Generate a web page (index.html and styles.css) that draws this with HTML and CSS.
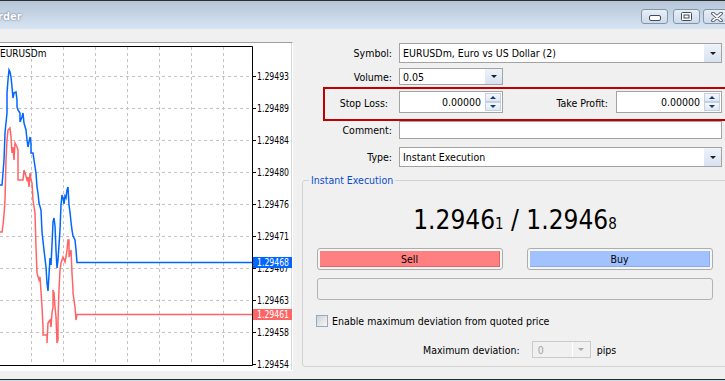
FILE: index.html
```html
<!DOCTYPE html>
<html lang="en">
<head>
    <meta charset="UTF-8" />
    <meta name="viewport" content="width=device-width, initial-scale=1" />
    <title>Order</title>
    <link rel="stylesheet" href="styles.css">
</head>
<body>

<div class="window">
    <div class="titlebar">
        <span class="title">rder</span>
        <div class="controls">
            <span class="ctl ctl-min">
                <svg width="12" height="6" viewBox="0 0 12 6"><rect x="0.5" y="0.5" width="11" height="5" rx="1.5" fill="#fff" stroke="#3d4b5e"/></svg>
            </span>
            <span class="ctl ctl-max">
                <svg width="11" height="9" viewBox="0 0 11 9"><rect x="0.5" y="0.5" width="10" height="8" rx="1" fill="#fff" stroke="#3d4b5e"/><rect x="3" y="3" width="5" height="3" fill="#fff" stroke="#3d4b5e"/></svg>
            </span>
            <span class="ctl ctl-close">
                <svg width="12" height="10" viewBox="0 0 12 10"><path d="M2 1.5 L10 8.5 M10 1.5 L2 8.5" stroke="#3d4b5e" stroke-width="3.6" stroke-linecap="round"/><path d="M2 1.5 L10 8.5 M10 1.5 L2 8.5" stroke="#fff" stroke-width="1.8" stroke-linecap="round"/></svg>
            </span>
        </div>
    </div>

    <div class="content">
        <div class="chart-frame">
            <svg class="chart" width="292" height="327" viewBox="0 43 292 327">
                <rect x="0" y="43" width="292" height="327" fill="#fff"/>
                <path d="M291.5 43 V370" stroke="#d9d9d9"/>
                <g class="grid">
                    <path d="M31.5 47 V365 M63.5 47 V365 M95.5 47 V365 M127.5 47 V365 M159.5 47 V365 M191.5 47 V365 M223.5 47 V365"/>
                    <path d="M0 76.5 H252 M0 108.5 H252 M0 140.5 H252 M0 172.5 H252 M0 204.5 H252 M0 236.5 H252 M0 268.5 H252 M0 300.5 H252 M0 332.5 H252"/>
                </g>
                <path d="M0 46.5 H252.5 V365.5 H0" fill="none" stroke="#000"/>
                <path d="M253 76.5h3 M253 108.5h3 M253 140.5h3 M253 172.5h3 M253 204.5h3 M253 236.5h3 M253 268.5h3 M253 300.5h3 M253 332.5h3 M253 364.5h3" stroke="#000"/>

                <text class="chart-title" x="0" y="57">EURUSDm</text>

                <g class="axis">
                    <text x="257" y="80" textLength="32" lengthAdjust="spacingAndGlyphs">1.29493</text>
                    <text x="257" y="112" textLength="32" lengthAdjust="spacingAndGlyphs">1.29489</text>
                    <text x="257" y="144" textLength="32" lengthAdjust="spacingAndGlyphs">1.29484</text>
                    <text x="257" y="176" textLength="32" lengthAdjust="spacingAndGlyphs">1.29480</text>
                    <text x="257" y="208" textLength="32" lengthAdjust="spacingAndGlyphs">1.29476</text>
                    <text x="257" y="240" textLength="32" lengthAdjust="spacingAndGlyphs">1.29471</text>
                    <text x="257" y="272" textLength="32" lengthAdjust="spacingAndGlyphs">1.29467</text>
                    <text x="257" y="304" textLength="32" lengthAdjust="spacingAndGlyphs">1.29463</text>
                    <text x="257" y="336" textLength="32" lengthAdjust="spacingAndGlyphs">1.29458</text>
                    <text x="257" y="368" textLength="32" lengthAdjust="spacingAndGlyphs">1.29454</text>
                </g>

                <polyline class="bid" points="0,232 2,232 3,225 4,215 5,200 6,160 7,140 8,130 10,128 11,137 12,153 13,147 14,160 15,143 17,147 18,150 18,180 23,180 24,170 25,173 27,180 28,177 29,187 30,173 31,180 32,183 33,200 35,213 36,247 37,273 39,280 40,277 42,307 43,327 43,335 47,335 47,343 48,323 50,320 51,327 52,313 53,307 53,290 54,293 55,307 56,317 57,343 58,340 58,320 59,290 60,270 61,263 62,260 63,257 65,262 66,257 67,250 68,240 69,240 69,257 71,250 72,273 73,290 73,293 75,307 76,320 77,314.5 252,314.5"/>
                <polyline class="ask" points="0,185 2,185 3,173 4,160 5,133 7,113 7,93 8,80 9,70 10,72 11,77 12,87 13,98 14,93 16,92 17,100 17,107 18,110 20,113 20,122 22,117 23,113 24,123 26,130 27,140 28,147 30,137 31,143 31,153 33,153 34,160 36,173 37,187 38,193 39,203 41,210 42,232 44,250 46,267 47,283 48,291 49,275 50,258 51,265 52,245 53,222 54,218 55,226 56,250 57,268 58,260 59,245 60,230 61,205 62,195 63,198 64,204 65,196 66,198 67,190 68,187 69,205 70,212 71,222 72,230 73,236 75,240 76,250 77,262.5 252,262.5"/>

                <rect x="253" y="257" width="39" height="11" fill="#0066ff"/>
                <text class="tag" x="257" y="266" textLength="32" lengthAdjust="spacingAndGlyphs">1.29468</text>
                <rect x="253" y="309" width="39" height="11" fill="#ff6464"/>
                <text class="tag" x="257" y="318" textLength="32" lengthAdjust="spacingAndGlyphs">1.29461</text>
            </svg>
        </div>

        <div class="form">
            <div class="row row-symbol">
                <label class="lbl">Symbol:</label>
                <div class="field wide">
                    <span class="val">EURUSDm, Euro vs US Dollar (2)</span>
                    <span class="drop"></span>
                </div>
            </div>

            <div class="row row-volume">
                <label class="lbl">Volume:</label>
                <div class="field short">
                    <span class="val">0.05</span>
                    <span class="drop"></span>
                </div>
            </div>

            <div class="row stops">
                <label class="lbl lbl-sl">Stop Loss:</label>
                <div class="field short num">
                    <span class="val">0.00000</span>
                    <span class="spin"><i class="up"></i><i class="down"></i></span>
                </div>
                <label class="lbl lbl-tp">Take Profit:</label>
                <div class="field tp num">
                    <span class="val">0.00000</span>
                    <span class="spin"><i class="up"></i><i class="down"></i></span>
                </div>
            </div>

            <div class="row row-comment">
                <label class="lbl">Comment:</label>
                <div class="field wide"></div>
            </div>

            <div class="row row-type">
                <label class="lbl">Type:</label>
                <div class="field wide">
                    <span class="val">Instant Execution</span>
                    <span class="drop"></span>
                </div>
            </div>

            <fieldset class="group">
                <legend>Instant Execution</legend>
                <div class="group-body">
                    <div class="quote">1.2946<small>1</small> / 1.2946<small>8</small></div>

                    <div class="trade">
                        <button class="btn sell"><span>Sell</span></button>
                        <button class="btn buy"><span>Buy</span></button>
                    </div>

                    <div class="bar"></div>

                    <div class="check-row">
                        <span class="checkbox"></span>
                        <span>Enable maximum deviation from quoted price</span>
                    </div>

                    <div class="dev-row">
                        <span>Maximum deviation:</span>
                        <div class="dev-combo">
                            <span class="val">0</span>
                            <span class="drop"></span>
                        </div>
                        <span>pips</span>
                    </div>
                </div>
            </fieldset>
        </div>
    </div>
</div>

</body>
</html>
```

FILE: styles.css
```css
* {
    box-sizing: border-box;
}
body {
    margin: 0;
    width: 725px;
    height: 381px;
    overflow: hidden;
    background: #cad8e9;
    font-family: "DejaVu Sans Condensed", "DejaVu Sans", "Liberation Sans", sans-serif;
    font-stretch: condensed;
    font-size: 10.5px;
    color: #000;
}
.window {
    height: 380px;
    background: #f0f0f0;
    border-bottom: 1px solid #2b2b2b;
    display: flex;
    flex-direction: column;
}

/* title bar */
.titlebar {
    height: 29px;
    flex: none;
    border-top: 1px solid #2e2e2e;
    background: linear-gradient(#b6c6d8, #d7e4f2);
    display: flex;
    justify-content: space-between;
    align-items: flex-start;
}
.title {
    margin: 9px 0 0 -2px;
    color: #fff;
    font-weight: bold;
    font-size: 11px;
    text-shadow: 0 0 2px #6d7f94, 0 0 1px #6d7f94;
}
.controls {
    display: flex;
    margin: 8px -5px 0 0;
}
.ctl {
    width: 27px;
    height: 15px;
    border: 1px solid #8494a9;
    border-radius: 3px;
    background: linear-gradient(#e7eef6, #cfdbea);
    display: flex;
    align-items: center;
    justify-content: center;
}
.ctl svg {
    display: block;
}
.ctl-min {
    margin-right: 5px;
    align-items: flex-end;
    padding-bottom: 2px;
}
.ctl-max {
    margin-right: 3px;
}

/* layout */
.content {
    flex: 1;
    display: flex;
    min-height: 0;
}

/* chart */
.chart-frame {
    flex: none;
    width: 293px;
    height: 329px;
    margin-top: 13px;
    border-top: 1px solid #a0a0a0;
    border-right: 1px solid #fff;
    border-bottom: 1px solid #fff;
}
.chart {
    display: block;
}
.grid path {
    stroke: #c4c4c4;
    stroke-dasharray: 3 3;
}
.chart text {
    font-family: "DejaVu Sans Condensed", "DejaVu Sans", sans-serif;
    font-size: 10px;
}
.tag {
    fill: #fff;
}
.ask, .bid {
    fill: none;
    stroke-width: 1.5;
    stroke-linejoin: miter;
}
.ask {
    stroke: #0066ff;
}
.bid {
    stroke: #ff6464;
}

/* order form */
.form {
    flex: 1;
    min-width: 0;
    display: flex;
    flex-direction: column;
}
.row {
    display: flex;
    align-items: center;
    flex: none;
}
.lbl {
    flex: none;
    width: 106px;
    padding-right: 7px;
    text-align: right;
}
.field {
    flex: none;
    display: flex;
    background: #fff;
    border: 1px solid #a3a3a3;
    height: 20px;
}
.field .val {
    flex: 1;
    display: flex;
    align-items: center;
    padding-left: 3px;
    white-space: nowrap;
}
.field.num .val {
    justify-content: flex-end;
    padding-right: 3px;
}
.wide {
    width: 323px;
}
.short {
    width: 104px;
}
.tp {
    width: 106px;
}
.drop {
    flex: none;
    width: 17px;
    background: linear-gradient(#eef3fa, #d7e2f0);
    display: flex;
    align-items: center;
    justify-content: center;
}
.drop::after {
    content: "";
    border-left: 3px solid transparent;
    border-right: 3px solid transparent;
    border-top: 3px solid #1f1f1f;
}
.spin {
    flex: none;
    width: 18px;
    display: flex;
    flex-direction: column;
    padding: 1px;
}
.spin i {
    flex: 1;
    display: flex;
    align-items: center;
    justify-content: center;
    border: 1px solid #c3d0e0;
    background: linear-gradient(#f5f8fc, #dfe8f3);
}
.spin i::after {
    content: "";
    border-left: 3px solid transparent;
    border-right: 3px solid transparent;
}
.spin .up::after {
    border-bottom: 3px solid #1b3a78;
}
.spin .down::after {
    border-top: 3px solid #1b3a78;
}

.row-symbol {
    margin-top: 14px;
}
.row-volume {
    margin-top: 5px;
}
.row-volume .field {
    height: 17px;
}
.stops {
    margin: 2px 0 0 30px;
    width: 412px;
    height: 34px;
    border: 2px solid #c00000;
    align-items: flex-start;
    padding-top: 2px;
}
.stops .field {
    height: 22px;
}
.stops .lbl {
    align-self: center;
    margin-top: -4px;
}
.lbl-sl {
    width: 74px;
    padding-right: 11px;
}
.lbl-tp {
    width: 113px;
    padding-right: 8px;
}
.row-comment .field {
    height: 18px;
}
.row-type {
    margin-top: 8px;
}

/* instant execution group */
.group {
    flex: none;
    margin: 7px 0 0 9px;
    width: 426px;
    padding: 0 6px 8px;
    border: 1px solid #d3d3d3;
    border-radius: 3px;
}
.group legend {
    padding: 0 2px;
    color: #0a4bd1;
    line-height: 13px;
}
.group-body {
    padding: 0 8px;
}
.quote {
    margin-top: 18px;
    height: 30px;
    line-height: 30px;
    text-align: center;
    font-size: 26px;
}
.quote small {
    font-size: 15px;
}
.trade {
    display: flex;
    gap: 24px;
    margin-top: 13px;
}
.btn {
    flex: 1;
    height: 22px;
    padding: 2px;
    border: 1px solid #adadad;
    border-radius: 3px;
    background: #f6f6f6;
    font: inherit;
    color: #000;
}
.btn span {
    display: flex;
    height: 100%;
    align-items: center;
    justify-content: center;
    border-right: 1px solid;
    border-bottom: 1px solid;
}
.sell span {
    background: #ff8080;
    border-color: #e06666;
}
.buy span {
    background: #a2c1ff;
    border-color: #88aaf0;
}
.bar {
    margin-top: 8px;
    height: 22px;
    border: 1px solid #b3b3b3;
    border-radius: 3px;
    background: #f0f0f0;
}
.check-row {
    margin-top: 15px;
    display: flex;
    align-items: center;
    gap: 4px;
    height: 12px;
}
.checkbox {
    margin-left: -1px;
    width: 12px;
    height: 12px;
    border: 1px solid #94a9c6;
    background: linear-gradient(135deg, #d2d2d2, #f7f7f7);
}
.dev-row {
    margin-top: 14px;
    display: flex;
    align-items: center;
    padding-left: 106px;
}
.dev-combo {
    margin: 0 6px 0 12px;
    width: 59px;
    height: 17px;
    display: flex;
    border: 1px solid #cacaca;
    color: #a3a3a3;
}
.dev-combo .val {
    flex: 1;
    padding-left: 5px;
    display: flex;
    align-items: center;
    border-right: 1px solid #fff;
}
.dev-combo .drop {
    background: none;
}
.dev-combo .drop::after {
    border-top-color: #a8a8a8;
}
```
